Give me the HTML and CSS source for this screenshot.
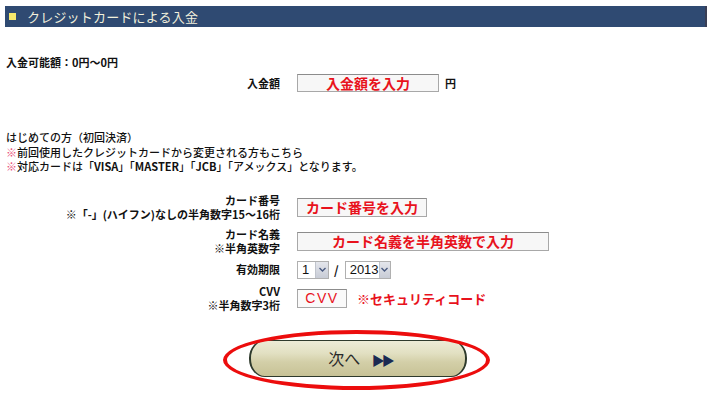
FILE: index.html
```html
<!DOCTYPE html>
<html lang="ja">
<head>
<meta charset="utf-8">
<title>クレジットカードによる入金</title>
<link rel="stylesheet" href="styles.css">
</head>
<body>
<div class="page">
  <div class="header"><span class="sq"></span><span class="title">クレジットカードによる入金</span></div>

  <p class="avail">入金可能額：0円〜0円</p>

  <div class="form first">
    <div class="label">入金額</div>
    <div class="field"><input class="inp w142" type="text" value="入金額を入力" readonly><span class="unit">円</span></div>
  </div>

  <div class="notice">はじめての方（初回決済）<br><span class="mark">※</span>前回使用したクレジットカードから変更される方もこちら<br><span class="mark">※</span>対応カードは「<b>VISA</b>」「<b>MASTER</b>」「<b>JCB</b>」「アメックス」となります。</div>

  <div class="form">
    <div class="label">カード番号<br>※「-」(ハイフン)なしの半角数字15〜16桁</div>
    <div class="field"><input class="inp w130" type="text" value="カード番号を入力" readonly></div>

    <div class="label">カード名義<br>※半角英数字</div>
    <div class="field"><input class="inp w252" type="text" value="カード名義を半角英数で入力" readonly></div>

    <div class="label">有効期限</div>
    <div class="field">
      <div class="sel w31"><span class="val">1</span><span class="arr"><svg width="7" height="5" viewBox="0 0 7 5"><path d="M0.5 1 L3.5 4 L6.5 1" fill="none" stroke="#4a5a80" stroke-width="1.4"/></svg></span></div>
      <span class="slash">/</span>
      <div class="sel w45"><span class="val">2013</span><span class="arr"><svg width="7" height="5" viewBox="0 0 7 5"><path d="M0.5 1 L3.5 4 L6.5 1" fill="none" stroke="#4a5a80" stroke-width="1.4"/></svg></span></div>
    </div>

    <div class="label">CVV<br>※半角数字3桁</div>
    <div class="field"><input class="inp w50 cvv" type="text" value="CVV" readonly><span class="sec">※セキュリティコード</span></div>
  </div>

  <div class="btnwrap">
    <button class="next" type="button">次へ <span class="tri">▶▶</span></button>
    <span class="ring"></span>
  </div>
</div>
</body>
</html>
```
FILE: styles.css
```css
html, body { margin: 0; padding: 0; background: #fff; }
body {
  font-family: "Noto Sans CJK JP", "Liberation Sans", sans-serif;
  font-size: 11px;
  color: #111;
  width: 716px;
  height: 401px;
  overflow: hidden;
}
.page { padding: 6px 9px 0 5px; }
p { margin: 0; }

.header {
  height: 21px;
  background: #2f4a72;
  border-right: 2px solid #3a3f55;
  display: flex;
  align-items: center;
  padding-left: 4px;
}
.sq { width: 7px; height: 7px; background: #f6e86c; margin-right: 11px; }
.title { color: #f2f0dc; font-size: 13px; line-height: 21px; letter-spacing: 0.2px; }

.avail { margin-top: 28px; margin-left: 1px; font-weight: bold; line-height: 14px; }

.form {
  display: grid;
  grid-template-columns: 275px 1fr;
  column-gap: 17px;
  row-gap: 5px;
  align-items: center;
  margin-top: 19px;
}
.form.first { margin-top: 5px; }
.label { text-align: right; font-weight: bold; line-height: 14.5px; }
.field { display: flex; align-items: center; min-height: 18px; }

.inp {
  box-sizing: border-box;
  height: 19px;
  border: 1px solid #a8a8a8;
  border-top-color: #8c8c8c;
  background: #f7f7f7;
  color: #e8121c;
  font-family: "Noto Sans CJK JP", "Liberation Sans", sans-serif;
  font-size: 14px;
  font-weight: bold;
  text-align: center;
  padding: 0;
  margin: 0;
  line-height: 17px;
}
.w142 { width: 142px; height: 18px; }
.w130 { width: 130px; }
.w252 { width: 252px; }
.w50 { width: 50px; }
.cvv { font-family: "Liberation Sans", sans-serif; font-weight: normal; letter-spacing: 1.5px; background: #fafafa; }
.unit { margin-left: 6px; font-weight: bold; }
.sec { margin-left: 10px; color: #e8121c; font-weight: bold; font-size: 13px; }

.notice { margin-top: 38px; margin-left: 1px; line-height: 14.5px; font-weight: 500; }
.notice b { font-weight: bold; }
.mark { color: #e8507a; display: inline-block; height: 13px; line-height: 13px; vertical-align: top; margin-top: 1px; }

.sel {
  box-sizing: border-box;
  height: 18px;
  border: 1px solid #b0b0b0;
  background: #fff;
  display: flex;
  align-items: stretch;
  font-family: "Liberation Sans", sans-serif;
  font-size: 13px;
}
.sel .val { flex: 1; padding-left: 4px; line-height: 16px; }
.sel .arr {
  width: 12px;
  background: linear-gradient(#e4e6ec, #c8ccd6);
  border-left: 1px solid #c0c4cc;
  display: flex; align-items: center; justify-content: center;
}
.w31 { width: 32px; }
.w45 { width: 46px; }
.slash { margin: 0 6px 0 5px; font-weight: bold; font-size: 12px; }

.btnwrap {
  position: relative;
  width: 218px;
  margin: 27px auto 0;
  left: 2px;
}
.next {
  display: block;
  width: 218px;
  height: 37px;
  border: 1px solid #2e3a2c;
  border-left-width: 2px;
  border-right-width: 2px;
  border-radius: 16px / 18px;
  background: linear-gradient(#ecebd6 0%, #e2e0c2 35%, #d3cfa8 60%, #c7c296 100%);
  font-family: "Noto Sans CJK JP", "Liberation Sans", sans-serif;
  font-size: 16px;
  color: #2a2a2a;
  padding: 0 0 0 4px;
  margin: 0;
}
.tri { color: #1b2a52; font-size: 13px; letter-spacing: -3px; margin-left: 8px; }
.ring {
  position: absolute;
  left: -26px;
  top: -10px;
  width: 259px;
  height: 52px;
  border: 4px solid #ec0d0d;
  border-radius: 50%;
  pointer-events: none;
}
```
